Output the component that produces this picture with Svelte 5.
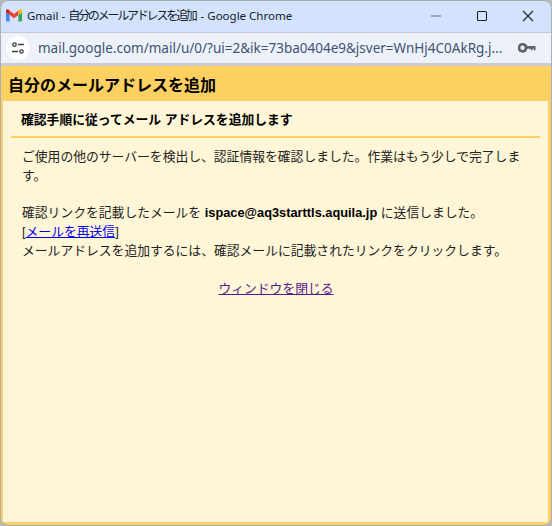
<script lang="ts">
	const url = 'mail.google.com/mail/u/0/?ui=2&ik=73ba0404e9&jsver=WnHj4C0AkRg.j...';
</script>

<div class="window">
	<header class="titlebar">
		<svg class="gmail" viewBox="0 0 16 13" width="16" height="13" aria-hidden="true">
			<path d="M1 12.5h2.6V6L0 3.4v7.8c0 .7.5 1.3 1 1.3z" fill="#4285f4" />
			<path d="M12.4 12.5H15c.6 0 1-.6 1-1.3V3.4L12.4 6z" fill="#34a853" />
			<path d="M12.4 1.6V6L16 3.4V2C16 .6 14.5-.2 13.4.7z" fill="#fbbc04" />
			<path d="M3.6 6V1.6L8 5l4.4-3.4V6L8 9.3z" fill="#ea4335" />
			<path d="M0 2v1.4L3.6 6V1.6L2.6.7C1.500-.2 0 .6 0 2z" fill="#c5221f" />
		</svg>
		<span class="title">Gmail - <span class="jp">自分のメールアドレスを追加</span> - Google Chrome</span>
		<div class="controls">
			<svg viewBox="0 0 12 12" width="12" height="12" aria-hidden="true"><path d="M1 6h10" stroke="#6b7280" stroke-width="1.200" /></svg>
			<svg viewBox="0 0 12 12" width="12" height="12" aria-hidden="true"><rect x="1.500" y="1.500" width="9" height="9" rx="1" fill="none" stroke="#1f2328" stroke-width="1.100" /></svg>
			<svg viewBox="0 0 12 12" width="12" height="12" aria-hidden="true"><path d="M1 1l10 10M11 1L1 11" stroke="#1f2328" stroke-width="1.100" /></svg>
		</div>
	</header>

	<div class="addressbar">
		<span class="tune">
			<svg viewBox="0 0 16 16" width="16" height="16" aria-hidden="true">
				<circle cx="4.500" cy="4.500" r="1.700" fill="none" stroke="#3c4043" stroke-width="1.300" />
				<path d="M8 4.500h6M2 11.500h6" stroke="#3c4043" stroke-width="1.300" />
				<circle cx="11.500" cy="11.500" r="1.700" fill="none" stroke="#3c4043" stroke-width="1.300" />
			</svg>
		</span>
		<span class="url">{url}</span>
		<svg class="key" viewBox="0 0 18 10" width="18" height="10" aria-hidden="true">
			<path d="M4.800 0a4.800 4.800 0 0 1 4.500 3h8.200v4.300h-1.700V5.800h-1.400v1.500h-1.800V5.800H9.300A4.800 4.800 0 1 1 4.800 0z" fill="#5f6368" />
			<circle cx="4.500" cy="4.800" r="2.200" fill="#edf2fa" />
		</svg>
	</div>

	<main class="popup">
		<h1>自分のメールアドレスを追加</h1>
		<div class="panel">
			<h2>確認手順に従ってメール アドレスを追加します</h2>
			<div class="body">
				<p class="lead">ご使用の他のサーバーを検出し、認証情報を確認しました。作業はもう少しで完了します。</p>
				<p class="sent">
					確認リンクを記載したメールを <b>ispace@aq3starttls.aquila.jp</b> に送信しました。<br />
					[<a class="resend" href="#resend">メールを再送信</a>]<br />
					メールアドレスを追加するには、確認メールに記載されたリンクをクリックします。
				</p>
				<p class="close"><a href="#close">ウィンドウを閉じる</a></p>
			</div>
		</div>
	</main>
</div>

<style>
	:global(body) {
		margin: 0;
		background: #b9b9b9;
	}

	.window {
		width: 552px;
		height: 526px;
		display: flex;
		flex-direction: column;
		overflow: hidden;
		border-radius: 8px;
		box-sizing: border-box;
		border: 1px solid #a9aeb5;
		font-family: "Liberation Sans", "Noto Sans CJK JP", sans-serif;
	}

	.titlebar {
		height: 31px;
		flex: none;
		box-sizing: border-box;
		display: flex;
		align-items: center;
		background: #d3e3fd;
		padding: 0 0 2px 5px;
		font-family: "Noto Sans", "Noto Sans CJK JP", sans-serif;
	}

	.gmail {
		flex: none;
	}

	.title {
		margin-left: 5px;
		padding-bottom: 2px;
		font-size: 11.5px;
		color: #16202c;
		white-space: nowrap;
		flex: 1;
	}

	.jp {
		font-size: 12px;
		letter-spacing: -2.2px;
		margin-right: 2px;
	}

	.controls {
		display: flex;
		gap: 34px;
		padding-right: 17px;
		align-items: center;
	}

	.addressbar {
		height: 34px;
		flex: none;
		box-sizing: border-box;
		display: flex;
		align-items: center;
		background: #edf2fa;
		border-top: 1px solid #c4c9d2;
		border-bottom: 3px solid #c9ccd3;
		padding: 0 15px 0 5px;
		font-family: "Noto Sans", sans-serif;
	}

	.tune {
		width: 24px;
		height: 24px;
		flex: none;
		display: flex;
		align-items: center;
		justify-content: center;
		background: #fff;
		border-radius: 50%;
	}

	.url {
		flex: 1;
		min-width: 0;
		margin-left: 8px;
		font-size: 13.5px;
		color: #3f5273;
		white-space: nowrap;
	}

	.key {
		flex: none;
	}

	.popup {
		flex: 1;
		min-height: 0;
		display: flex;
		flex-direction: column;
		background: #fcd162;
		padding: 0 3px 3px 2px;
	}

	h1 {
		margin: 0;
		height: 35px;
		flex: none;
		font-size: 16px;
		line-height: 40px;
		padding-left: 5px;
		color: #000;
	}

	.panel {
		flex: 1;
		background: #fff6d8;
		padding: 0 8px;
		font-size: 12.8px;
		color: #222;
	}

	h2 {
		margin: 0;
		height: 37px;
		font-size: 12.8px;
		line-height: 37px;
		padding-left: 10px;
		color: #000;
		border-bottom: 2px solid #fcd162;
		box-sizing: border-box;
	}

	.body {
		padding: 9px 10px 0 11px;
		line-height: 19px;
	}

	p {
		margin: 0;
	}

	.lead {
		margin-bottom: 18px;
	}

	.sent b {
		color: #000;
	}

	.resend {
		color: #00e;
	}

	.close {
		margin-top: 19px;
		text-align: center;
	}

	.close a {
		color: #551a8b;
	}
</style>
